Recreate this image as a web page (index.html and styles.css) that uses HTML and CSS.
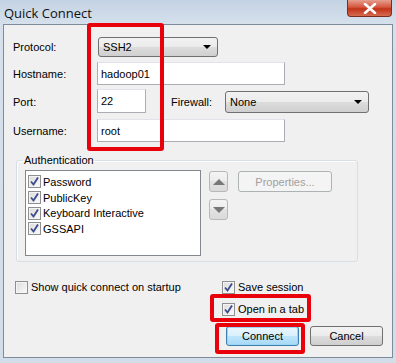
FILE: index.html
```html
<!DOCTYPE html>
<html lang="en">

<head>
    <meta charset="UTF-8">
    <meta name="viewport" content="width=device-width, initial-scale=1.0">
    <title>Quick Connect</title>
    <link rel="stylesheet" href="styles.css">
</head>

<body>
    <div class="window">
        <div class="titlebar">
            <span class="title">Quick Connect</span>
            <span class="close-btn">
                <svg width="14" height="11" viewBox="0 0 14 11">
                    <path d="M2 1 L12 10 M12 1 L2 10" stroke="#fff" stroke-width="2.6" stroke-linecap="round"/>
                </svg>
            </span>
        </div>

        <div class="client">
            <div class="form-grid">
                <label>Protocol:</label>
                <div class="combo combo-protocol"><span>SSH2</span><i class="arrow"></i></div>

                <label>Hostname:</label>
                <input class="field field-wide" type="text" value="hadoop01">

                <label>Port:</label>
                <div class="port-row">
                    <input class="field field-port" type="text" value="22">
                    <label class="firewall-label">Firewall:</label>
                    <div class="combo combo-firewall"><span>None</span><i class="arrow"></i></div>
                </div>

                <label>Username:</label>
                <input class="field field-wide" type="text" value="root">
            </div>

            <fieldset class="group">
                <legend>Authentication</legend>
                <div class="group-body">
                    <div class="listbox">
                        <div class="list-item"><span class="cb checked"></span>Password</div>
                        <div class="list-item"><span class="cb checked"></span>PublicKey</div>
                        <div class="list-item"><span class="cb checked"></span>Keyboard Interactive</div>
                        <div class="list-item"><span class="cb checked"></span>GSSAPI</div>
                    </div>
                    <div class="move-btns">
                        <span class="small-btn"><i class="tri-up"></i></span>
                        <span class="small-btn"><i class="tri-down"></i></span>
                    </div>
                    <span class="btn btn-disabled">Properties...</span>
                </div>
            </fieldset>

            <div class="bottom">
                <div class="bottom-left">
                    <div class="check-row"><span class="cb"></span>Show quick connect on startup</div>
                </div>
                <div class="bottom-right">
                    <div class="check-row"><span class="cb checked"></span>Save session</div>
                    <div class="check-row"><span class="cb checked"></span>Open in a tab</div>
                    <div class="buttons">
                        <span class="btn btn-default">Connect</span>
                        <span class="btn">Cancel</span>
                    </div>
                </div>
            </div>
        </div>

        <!-- red annotation boxes -->
        <div class="mark mark-fields"></div>
        <div class="mark mark-tab"></div>
        <div class="mark mark-connect"></div>
    </div>
</body>

</html>
```

FILE: styles.css
```css
body {
    margin: 0;
    padding: 0;
    font-family: 'Liberation Sans', Arial, sans-serif;
    font-size: 11px;
    color: #000;
}

.window {
    position: relative;
    width: 396px;
    height: 363px;
    background: linear-gradient(to bottom, #c4d3e3 0, #d5e0ec 24px, #d3dde9 100%);
    overflow: hidden;
}

.titlebar {
    height: 24px;
    display: flex;
    justify-content: space-between;
    align-items: flex-start;
}

.title {
    font-family: 'Open Sans', 'Noto Sans', sans-serif;
    font-size: 13px;
    margin: 4px 0 0 4px;
    color: #111;
}

.close-btn {
    width: 45px;
    height: 17px;
    margin-right: 4px;
    border: 1px solid #7b2b22;
    border-top: none;
    border-radius: 0 0 4px 4px;
    background: linear-gradient(to bottom, #e6a08f 0, #d5553f 45%, #c23219 55%, #d66b4f 100%);
    display: flex;
    justify-content: center;
    align-items: center;
    box-sizing: border-box;
}

.client {
    margin: 0 3px;
    height: 334px;
    background-color: #f0f0f0;
    border: 1px solid #7e8b9b;
    box-sizing: border-box;
    padding: 12px 0 0 9px;
}

/* top form */
.form-grid {
    display: grid;
    grid-template-columns: 84px auto;
    align-items: center;
    row-gap: 5px;
}

.form-grid label {
    line-height: 16px;
}

.combo {
    height: 20px;
    box-sizing: border-box;
    border: 1px solid #707070;
    border-radius: 3px;
    background: linear-gradient(to bottom, #f2f2f2 0, #ebebeb 50%, #dddddd 50%, #cfcfcf 100%);
    display: flex;
    align-items: center;
    justify-content: space-between;
    padding: 0 6px 0 4px;
}

.combo-protocol {
    width: 120px;
    margin-left: 1px;
}

.combo-firewall {
    width: 144px;
    height: 22px;
}

.arrow {
    width: 0;
    height: 0;
    border-left: 4px solid transparent;
    border-right: 4px solid transparent;
    border-top: 4px solid #000;
}

.field {
    height: 23px;
    box-sizing: border-box;
    border: 1px solid #abadb3;
    border-top-color: #e2e3ea;
    background: #fff;
    font-family: inherit;
    font-size: 11px;
    padding: 0 3px;
    margin: 0;
    outline: none;
}

.field-wide {
    width: 188px;
}

.port-row {
    display: flex;
    align-items: center;
    margin: 1px 0;
}

.field-port {
    width: 49px;
    height: 24px;
    margin-top: -2px;
}

.firewall-label {
    margin: 0 13px 0 25px;
}

/* authentication group */
.group {
    width: 342px;
    box-sizing: border-box;
    margin: 12px 0 0 3px;
    padding: 0 8px 5px 8px;
    border: 1px solid #d5dfe5;
    border-radius: 3px;
    box-shadow: inset 1px 1px 0 #fff;
}

.group legend {
    padding: 0 1px;
    margin-left: -2px;
}

.group-body {
    display: flex;
    align-items: flex-start;
    margin-top: 4px;
}

.listbox {
    width: 176px;
    height: 86px;
    box-sizing: border-box;
    border: 1px solid #828790;
    background: #fff;
    padding: 3px 0 0 2px;
}

.list-item {
    display: flex;
    align-items: center;
    height: 15.7px;
}

.cb {
    width: 13px;
    height: 13px;
    box-sizing: border-box;
    border: 1px solid #8e8f8f;
    background: linear-gradient(135deg, #dcdcdc 0, #fafafa 100%);
    box-shadow: inset 0 0 0 1px #f4f4f4;
    margin-right: 2px;
    flex-shrink: 0;
}

.cb.checked {
    background-image: url("data:image/svg+xml;utf8,<svg xmlns='http://www.w3.org/2000/svg' width='11' height='11'><path d='M2 5.5 L4.5 8.5 L9 1.5' fill='none' stroke='%233b4a8a' stroke-width='1.8'/></svg>"), linear-gradient(135deg, #dcdcdc 0, #fafafa 100%);
    background-repeat: no-repeat;
}

.move-btns {
    display: flex;
    flex-direction: column;
    gap: 7px;
    margin: 1px 0 0 8px;
}

.small-btn {
    width: 19px;
    height: 21px;
    box-sizing: border-box;
    border: 1px solid #b8b8b8;
    border-radius: 3px;
    background: linear-gradient(to bottom, #f4f4f4 0, #ececec 50%, #e2e2e2 50%, #dadada 100%);
    display: flex;
    align-items: center;
    justify-content: center;
}

.tri-up {
    width: 0;
    height: 0;
    border-left: 6px solid transparent;
    border-right: 6px solid transparent;
    border-bottom: 6px solid #777;
}

.tri-down {
    width: 0;
    height: 0;
    border-left: 6px solid transparent;
    border-right: 6px solid transparent;
    border-top: 6px solid #777;
}

.btn {
    width: 73px;
    height: 20px;
    box-sizing: border-box;
    border: 1px solid #707070;
    border-radius: 3px;
    background: linear-gradient(to bottom, #f2f2f2 0, #ebebeb 50%, #dddddd 50%, #cfcfcf 100%);
    display: flex;
    align-items: center;
    justify-content: center;
}

.btn-disabled {
    width: 94px;
    height: 21px;
    margin: 1px 0 0 10px;
    color: #a0a0a0;
    border-color: #adb2b5;
    background: #f4f4f4;
}

.btn-default {
    border-color: #3c7fb1;
    background: linear-gradient(to bottom, #eaf6fd 0, #d9f0fc 50%, #bee6fd 50%, #a7d9f5 100%);
    box-shadow: inset 0 0 0 1px #9cd6f3;
}

/* bottom area */
.bottom {
    display: flex;
    margin-top: 18px;
}

.bottom-left {
    width: 207px;
    padding-left: 2px;
}

.bottom-right {
    display: flex;
    flex-direction: column;
}

.check-row {
    display: flex;
    align-items: center;
    height: 14px;
    margin-bottom: 8px;
}

.check-row .cb {
    margin-right: 3px;
}

.buttons {
    display: flex;
    gap: 11px;
    margin: 2px 0 0 4px;
}

/* red annotation boxes */
.mark {
    position: absolute;
    border: 4px solid #e8000b;
    border-radius: 3px;
    box-sizing: border-box;
}

.mark-fields {
    left: 87px;
    top: 23px;
    width: 77px;
    height: 128px;
}

.mark-tab {
    left: 210px;
    top: 294px;
    width: 101px;
    height: 28px;
}

.mark-connect {
    left: 215px;
    top: 323px;
    width: 90px;
    height: 31px;
}
```
